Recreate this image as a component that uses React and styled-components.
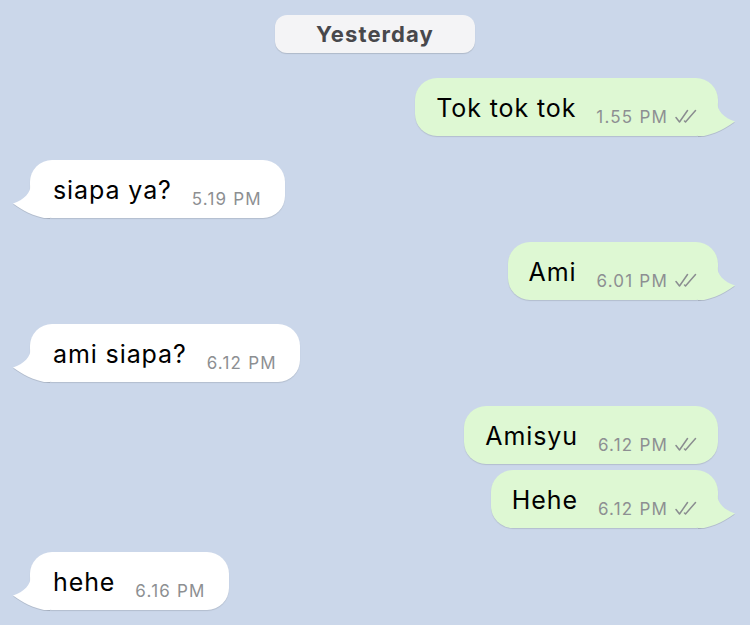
import React from 'react';
import styled, { createGlobalStyle } from 'styled-components';

const GlobalStyle = createGlobalStyle`
  html, body {
    margin: 0;
    padding: 0;
    background: #cbd7ea;
  }

  body {
    font-family: Inter, 'Liberation Sans', sans-serif;
  }
`;

const Chat = styled.div`
  background: #cbd7ea;
  box-sizing: border-box;
  display: flex;
  flex-direction: column;
  height: 625px;
  overflow: hidden;
  padding: 15px 32px 0 30px;
  width: 750px;

  & > * {
    flex-shrink: 0;
  }
`;

const DayPill = styled.div`
  align-items: center;
  align-self: center;
  background: #f4f4f6;
  border-radius: 12px;
  box-shadow: 0 1px 1px rgba(0, 0, 0, 0.14);
  box-sizing: border-box;
  color: #48484c;
  display: flex;
  font-size: 22px;
  font-weight: 700;
  height: 38px;
  justify-content: center;
  letter-spacing: 1.1px;
  margin: 0 0 25px 2px;
  padding-bottom: 1px;
  width: 200px;
`;

const Group = styled.div`
  align-items: ${props => (props.out ? 'flex-end' : 'flex-start')};
  display: flex;
  flex-direction: column;
  gap: 6px;
  margin-bottom: 24px;
`;

const Bubble = styled.div`
  align-items: flex-end;
  background: ${props => (props.out ? '#def8d3' : '#ffffff')};
  border-radius: 22px;
  box-shadow: 0 1px 1px rgba(0, 0, 0, 0.12);
  box-sizing: border-box;
  display: flex;
  flex-shrink: 0;
  gap: 20px;
  height: 58px;
  padding: ${props => (props.out ? '0 21px 13px 21px' : '0 23px 13px 23px')};
  position: relative;
`;

const Text = styled.span`
  color: #000;
  font-size: 25px;
  letter-spacing: 0.9px;
  line-height: 30px;
`;

const Meta = styled.span`
  align-items: flex-end;
  color: #8d8f92;
  display: flex;
  font-size: 17px;
  gap: 7px;
  letter-spacing: 1.2px;
  line-height: 12px;
`;

const TailSvg = styled.svg`
  bottom: 0;
  filter: drop-shadow(0 1px 0.5px rgba(0, 0, 0, 0.12));
  height: 40px;
  position: absolute;
  width: 38px;
  ${props => (props.out ? 'right: -18px;' : 'left: -18px; transform: scaleX(-1);')}
`;

const Tail = ({ out }) => (
  <TailSvg out={out} viewBox="0 0 38 40">
    <path
      d="M0 0 L19 0 L19 5 C19 15 26 22 37 25.5 C31 29 24 36 6 40 L0 40 Z"
      fill={out ? '#def8d3' : '#ffffff'}
    />
  </TailSvg>
);

const Ticks = () => (
  <svg width="22" height="14" viewBox="0 0 22 14" fill="none" stroke="#8a8d90" strokeWidth="1.5" strokeLinecap="round" strokeLinejoin="round">
    <path d="M1 8.5 L4.5 13 L12.5 1.5" />
    <path d="M9.5 12 L10.5 13 L20.5 1.5" />
  </svg>
);

const Message = ({ out, text, time, tail }) => (
  <Bubble out={out}>
    <Text>{text}</Text>
    <Meta>
      {time}
      {out && <Ticks />}
    </Meta>
    {tail && <Tail out={out} />}
  </Bubble>
);

const groups = [
  { out: true, items: [{ text: 'Tok tok tok', time: '1.55 PM' }] },
  { out: false, items: [{ text: 'siapa ya?', time: '5.19 PM' }] },
  { out: true, items: [{ text: 'Ami', time: '6.01 PM' }] },
  { out: false, items: [{ text: 'ami siapa?', time: '6.12 PM' }] },
  {
    out: true,
    items: [
      { text: 'Amisyu', time: '6.12 PM' },
      { text: 'Hehe', time: '6.12 PM' },
    ],
  },
  { out: false, items: [{ text: 'hehe', time: '6.16 PM' }] },
];

const App = () => {
  return (
    <Chat>
      <GlobalStyle />
      <DayPill>Yesterday</DayPill>
      {groups.map((group, i) => (
        <Group key={i} out={group.out}>
          {group.items.map((msg, j) => (
            <Message
              key={j}
              out={group.out}
              text={msg.text}
              time={msg.time}
              tail={j === group.items.length - 1}
            />
          ))}
        </Group>
      ))}
    </Chat>
  );
};

export default App;
